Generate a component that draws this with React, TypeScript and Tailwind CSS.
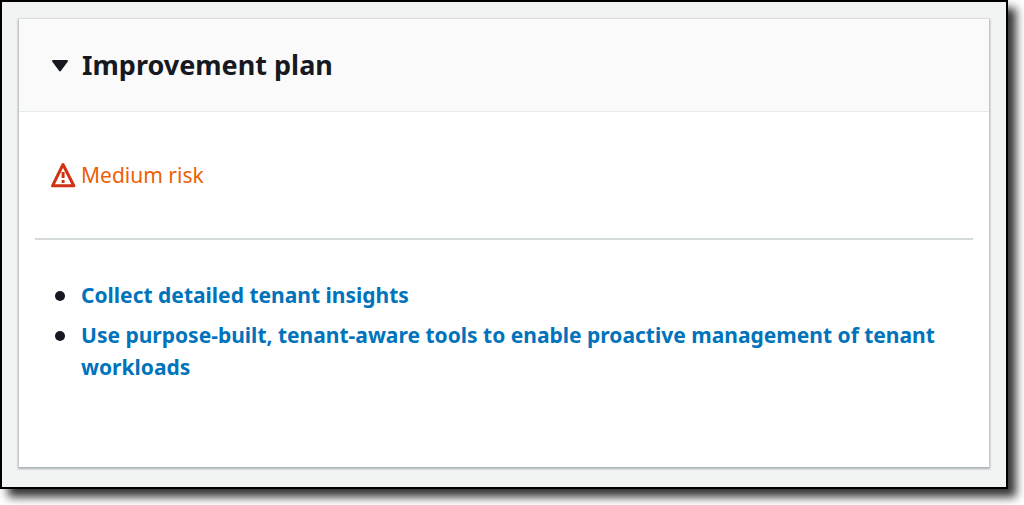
import { useState } from "react";

const improvements = [
  "Collect detailed tenant insights",
  "Use purpose-built, tenant-aware tools to enable proactive management of tenant workloads",
];

function WarningIcon() {
  return (
    <svg
      viewBox="0 0 26 26"
      className="w-[26px] h-[26px] shrink-0"
      fill="none"
      stroke="#d13212"
      strokeWidth="3"
      strokeLinejoin="round"
      aria-hidden="true"
    >
      <path d="M12 2.5 L1.5 23.8 H22.8 Z" />
      <path d="M12.1 10 V16 M12.1 18 V21" />
    </svg>
  );
}

function PlanHeader({
  open,
  onToggle,
}: {
  open: boolean;
  onToggle: () => void;
}) {
  return (
    <h2 className="bg-[#fafafa] border-b border-[#e6eaea]">
      <button
        type="button"
        aria-expanded={open}
        onClick={onToggle}
        className="w-full flex items-center gap-[11px] px-8 py-7 text-left text-[27px] leading-9 font-bold"
      >
        <svg
          viewBox="0 0 20 16"
          className={open ? "w-5 h-4" : "w-5 h-4 -rotate-90"}
          fill="#16191f"
          stroke="#16191f"
          strokeWidth="2"
          strokeLinejoin="round"
          aria-hidden="true"
        >
          <path d="M2 4 H16 L9 13.5 Z" />
        </svg>
        Improvement plan
      </button>
    </h2>
  );
}

export default function App() {
  const [open, setOpen] = useState(true);

  return (
    <div className="bg-white pr-4 pb-4 font-['Noto_Sans',sans-serif] text-[#16191f]">
      <div className="bg-[#f2f3f3] border-2 border-black px-[17px] pt-[17px] pb-5 shadow-[8px_8px_9px_rgba(0,0,0,0.8)]">
        <section className="bg-white shadow-[0_1px_2px_1px_rgba(0,28,36,0.3)]">
          <PlanHeader open={open} onToggle={() => setOpen(!open)} />
          {open && (
            <div className="px-4 pt-[47px] pb-[84px]">
              <div className="flex items-center gap-1 pl-4 pb-[47px] border-b-2 border-[#d5dbdb] text-[21px] leading-8 text-[#eb5f07]">
                <WarningIcon />
                Medium risk
              </div>
              <ul className="pl-5 pr-8 pt-[39px] space-y-2 text-[21px] leading-8 font-bold">
                {improvements.map((item) => (
                  <li
                    key={item}
                    className="flex gap-4 before:content-[''] before:mt-3 before:size-[10px] before:shrink-0 before:rounded-full before:bg-[#16191f]"
                  >
                    <a href="#" className="text-[#0073bb] hover:underline">
                      {item}
                    </a>
                  </li>
                ))}
              </ul>
            </div>
          )}
        </section>
      </div>
    </div>
  );
}
